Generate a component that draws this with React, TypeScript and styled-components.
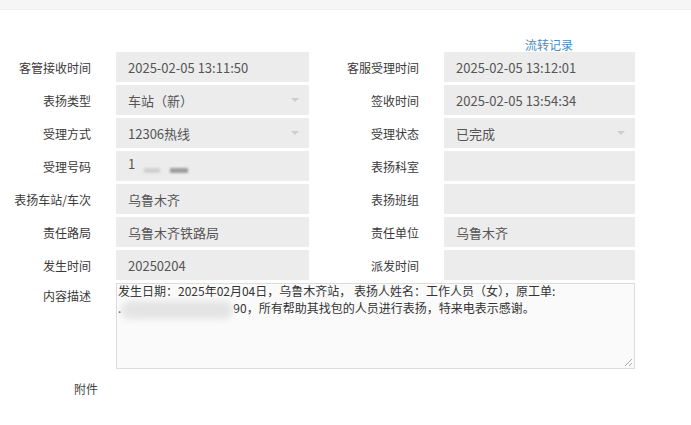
import { Fragment } from 'react';
import styled, { createGlobalStyle } from 'styled-components';

const GlobalStyle = createGlobalStyle`
  html, body {
    margin: 0;
    padding: 0;
    background: #fff;
    font-family: "Noto Sans CJK SC", "Noto Sans", sans-serif;
  }
`;

const Page = styled.div`
  width: 691px;
  height: 425px;
  overflow: hidden;
  background: #fff;
`;

const TopBar = styled.div`
  height: 9px;
  background: #f6f6f6;
  border-bottom: 1px solid #efefef;
`;

const LinkRow = styled.div`
  display: flex;
  justify-content: flex-end;
  padding: 27px 118px 0 0;
  height: 15px;
`;

const Link = styled.a`
  font-size: 12px;
  line-height: 15px;
  color: #4d8cbb;
  cursor: pointer;
`;

const Form = styled.div`
  display: grid;
  grid-template-columns: 116px 193px 135px 191px;
  grid-template-rows: repeat(7, 30px) auto;
  row-gap: 3px;
  width: 635px;
`;

const Label = styled.div<{ $top?: boolean }>`
  display: flex;
  justify-content: flex-end;
  align-items: ${({ $top }) => ($top ? 'flex-start' : 'center')};
  padding-right: 25px;
  padding-top: ${({ $top }) => ($top ? '4px' : '0')};
  font-size: 12px;
  color: #3a3a3a;
  white-space: nowrap;
`;

const Field = styled.div`
  position: relative;
  display: flex;
  align-items: center;
  padding: 0 12px;
  background: #ececec;
  font-size: 13px;
  color: #555;
  white-space: nowrap;
`;

const Arrow = styled.span`
  position: absolute;
  right: 10px;
  top: 13px;
  width: 0;
  height: 0;
  border-left: 4px solid transparent;
  border-right: 4px solid transparent;
  border-top: 4px solid #cdcdcd;
`;

const Blob = styled.span<{ $w: number; $shade: string }>`
  display: inline-block;
  width: ${({ $w }) => $w}px;
  height: 5px;
  margin: 9px 0 0 ${({ $w }) => ($w > 16 ? 10 : 9)}px;
  background: ${({ $shade }) => $shade};
  filter: blur(1px);
`;

const TextArea = styled.div`
  grid-column: 2 / 5;
  position: relative;
  height: 86px;
  box-sizing: border-box;
  border: 1px solid #dcdcdc;
  background: #fafafa;
  overflow: hidden;
  font-size: 12px;
  color: #333;
`;

const TextBody = styled.div`
  margin-top: -2px;
  padding-left: 1px;
  line-height: 17px;
`;

const Line = styled.div`
  white-space: nowrap;
  display: flex;
  align-items: flex-start;
`;

const Smear = styled.span`
  display: inline-block;
  width: 112px;
  height: 18px;
  margin-top: 2px;
  border-radius: 9px;
  background: #e4e4e4;
  filter: blur(3px);
`;

const Grip = styled.svg`
  position: absolute;
  right: 1px;
  bottom: 1px;
`;

const Footer = styled.div`
  display: flex;
  width: 116px;
  justify-content: flex-end;
  padding: 11px 18px 0 0;
  box-sizing: border-box;
  font-size: 12px;
  color: #444;
`;

type Row = { label: string; value?: string; select?: boolean; custom?: 'masked' };

const left: Row[] = [
  { label: '客管接收时间', value: '2025-02-05 13:11:50' },
  { label: '表扬类型', value: '车站（新）', select: true },
  { label: '受理方式', value: '12306热线', select: true },
  { label: '受理号码', custom: 'masked' },
  { label: '表扬车站/车次', value: '乌鲁木齐' },
  { label: '责任路局', value: '乌鲁木齐铁路局' },
  { label: '发生时间', value: '20250204' },
];

const right: Row[] = [
  { label: '客服受理时间', value: '2025-02-05 13:12:01' },
  { label: '签收时间', value: '2025-02-05 13:54:34' },
  { label: '受理状态', value: '已完成', select: true },
  { label: '表扬科室' },
  { label: '表扬班组' },
  { label: '责任单位', value: '乌鲁木齐' },
  { label: '派发时间' },
];

function renderField(row: Row) {
  if (row.custom === 'masked') {
    return (
      <Field>
        <span style={{ marginTop: -6 }}>1</span>
        <Blob $w={16} $shade="#cfcfcf" />
        <Blob $w={18} $shade="#9d9d9d" />
      </Field>
    );
  }
  return (
    <Field>
      {row.value}
      {row.select && <Arrow />}
    </Field>
  );
}

export default function App() {
  return (
    <Page>
      <GlobalStyle />
      <TopBar />
      <LinkRow>
        <Link>流转记录</Link>
      </LinkRow>
      <Form>
        {left.map((row, i) => (
          <Fragment key={i}>
            <Label>{row.label}</Label>
            {renderField(row)}
            <Label>{right[i].label}</Label>
            {renderField(right[i])}
          </Fragment>
        ))}
        <Label $top>内容描述</Label>
        <TextArea>
          <TextBody>
            <Line>发生日期：2025年02月04日，乌鲁木齐站， 表扬人姓名：工作人员（女），原工单:</Line>
            <Line>
              .<Smear />
              90，所有帮助其找包的人员进行表扬，特来电表示感谢。
            </Line>
          </TextBody>
          <Grip width="10" height="10" viewBox="0 0 10 10">
            <path d="M9 2 L2 9 M9 6 L6 9" stroke="#aaa" strokeWidth="1" />
          </Grip>
        </TextArea>
      </Form>
      <Footer>附件</Footer>
    </Page>
  );
}
